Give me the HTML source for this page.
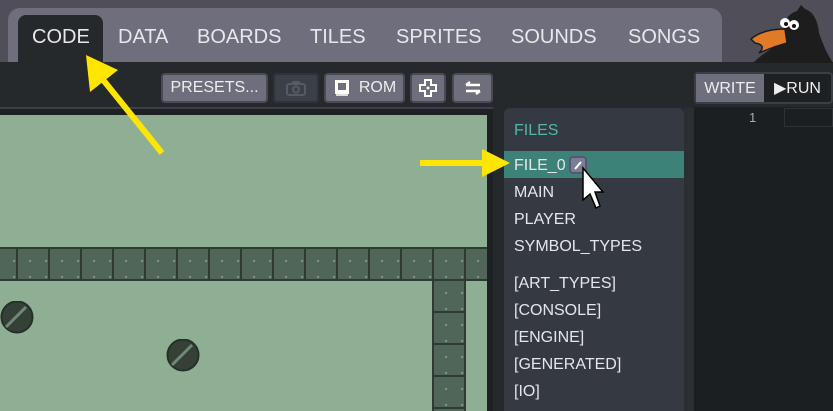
<!DOCTYPE html>
<html><head><style>
*{margin:0;padding:0;box-sizing:border-box}
body{width:833px;height:411px;overflow:hidden;background:#25292b;font-family:"Liberation Sans",sans-serif;position:relative}
.a{position:absolute}
.tab{position:absolute;top:26px;color:#e8e8ec;font-size:20px;letter-spacing:0}
.btn{position:absolute;top:73px;height:30px;background:#6f6e7c;border:2px solid #4a4a55;border-radius:4px;color:#eee;font-size:16px;display:flex;align-items:center;justify-content:center}
.f{position:absolute;left:514px;color:#e6e6ea;font-size:16px}
.tiles{background-color:#506658;background-image:linear-gradient(90deg,#2f3b32 2px,transparent 2px),linear-gradient(#2f3b32 2px,transparent 2px),radial-gradient(circle,#7f9585 1px,transparent 1.3px);background-size:32px 32px,32px 32px,16px 16px}
</style></head><body>
<div class="a" style="left:0;top:0;width:833px;height:62px;background:#4f4e59"></div>
<div class="a" style="left:8px;top:8px;width:714px;height:60px;background:#6f6e7c;border-radius:12px 12px 0 0"></div>
<div class="a" style="left:18px;top:15px;width:85px;height:50px;background:#25292b;border-radius:8px 8px 0 0"></div>
<div class="a" style="left:0;top:62px;width:833px;height:349px;background:#25292b"></div>
<div class="tab" style="left:32px">CODE</div>
<div class="tab" style="left:118px">DATA</div>
<div class="tab" style="left:197px">BOARDS</div>
<div class="tab" style="left:310px">TILES</div>
<div class="tab" style="left:396px">SPRITES</div>
<div class="tab" style="left:511px">SOUNDS</div>
<div class="tab" style="left:628px">SONGS</div>
<svg class="a" style="left:745px;top:3px" width="88" height="60" viewBox="0 0 88 60">
<path d="M8 60 Q22 46 40 40 Q34 14 52 8 L56 2 L60 6 Q72 10 74 30 Q80 48 88 60Z" fill="#1d1d1d"/>
<path d="M6 36 Q18 26 40 26 L42 40 Q28 44 14 50 Q22 42 10 40Z" fill="#e07a26" stroke="#1d1d1d" stroke-width="1.5"/>
<ellipse cx="40" cy="20" rx="5" ry="5" fill="#fff"/><ellipse cx="49" cy="22" rx="5" ry="5" fill="#fff"/>
<circle cx="41" cy="21" r="2" fill="#111"/><circle cx="49" cy="23" r="2" fill="#111"/>
</svg>
<div class="btn" style="left:161px;width:107px">PRESETS...</div>
<div class="btn" style="left:273px;width:46px;background:#3b3f47;border-color:#2f3238;color:#555"><svg width="22" height="16"><rect x="2" y="4" width="18" height="11" rx="2" fill="none" stroke="#555b63" stroke-width="2"/><circle cx="11" cy="9.5" r="3" fill="none" stroke="#555b63" stroke-width="2"/><rect x="7" y="1" width="8" height="3" fill="#555b63"/></svg></div>
<div class="btn" style="left:324px;width:81px"><svg width="18" height="18" style="margin-right:8px"><rect x="2" y="1" width="14" height="14" fill="#fff"/><rect x="5" y="4" width="8" height="7" fill="#6f6e7c"/><rect x="3" y="15" width="12" height="2" fill="#ddd"/></svg>ROM</div>
<div class="btn" style="left:410px;width:36px"><svg width="20" height="20"><path d="M7 2h6v5h5v6h-5v5H7v-5H2V7h5z" fill="none" stroke="#fff" stroke-width="2"/><circle cx="10" cy="10" r="1.5" fill="#fff"/></svg></div>
<div class="btn" style="left:452px;width:41px"><svg width="20" height="16"><path d="M3 5h14M3 5l4-3M17 11H3M17 11l-4 3" stroke="#fff" stroke-width="2.4" fill="none"/></svg></div>
<div class="a" style="left:0;top:107px;width:493px;height:2px;background:#3d4147"></div>
<div class="a" style="left:0;top:109px;width:493px;height:302px;background:#1e2124"></div>
<div class="a" style="left:0;top:115px;width:487px;height:296px;background:#8faf94;overflow:hidden">
 <div class="a tiles" style="left:-16px;top:132px;width:520px;height:34px;background-position:0 0,0 0,6px 6px"></div>
 <div class="a tiles" style="left:432px;top:164px;width:34px;height:140px;background-position:0 0,0 0,6px 6px"></div>
 <div class="a" style="left:432px;top:164px;width:2px;height:140px;background:#2f3b32"></div>
 <div class="a" style="left:464px;top:164px;width:2px;height:140px;background:#2f3b32"></div>
 <svg class="a" style="left:0;top:186px" width="34" height="34"><circle cx="17" cy="16" r="15.5" fill="#354037" stroke="#25302a" stroke-width="2"/><path d="M6 26L26 6" stroke="#6e8a75" stroke-width="3"/></svg>
 <svg class="a" style="left:166px;top:224px" width="34" height="34"><circle cx="17" cy="16" r="15.5" fill="#354037" stroke="#25302a" stroke-width="2"/><path d="M6 26L26 6" stroke="#6e8a75" stroke-width="3"/></svg>
</div>
<div class="a" style="left:504px;top:108px;width:180px;height:303px;background:#353a42;border-radius:6px 6px 0 0"></div>
<div class="a" style="left:684px;top:108px;width:10px;height:303px;background:#2b2f33"></div>
<div class="f" style="top:122px;color:#4fb8a8">FILES</div>
<div class="a" style="left:504px;top:151px;width:180px;height:27px;background:#3d8278"></div>
<div class="f" style="top:157px">FILE_0</div>
<div class="a" style="left:569px;top:156px;width:18px;height:18px;background:#7a7d95;border:2px solid #555870;border-radius:4px"><svg width="14" height="14"><path d="M4 11l6-7" stroke="#fff" stroke-width="2"/></svg></div>
<div class="f" style="top:184px">MAIN</div>
<div class="f" style="top:211px">PLAYER</div>
<div class="f" style="top:238px">SYMBOL_TYPES</div>
<div class="f" style="top:275px">[ART_TYPES]</div>
<div class="f" style="top:302px">[CONSOLE]</div>
<div class="f" style="top:329px">[ENGINE]</div>
<div class="f" style="top:356px">[GENERATED]</div>
<div class="f" style="top:383px">[IO]</div>
<div class="a" style="left:694px;top:72px;width:139px;height:32px;background:#1e2124;border:2px solid #3a3e45;border-radius:4px"></div>
<div class="a" style="left:696px;top:74px;width:68px;height:28px;background:#6f6e7c;color:#eee;font-size:16px;text-align:center;line-height:30px">WRITE</div>
<div class="a" style="left:774px;top:74px;color:#eee;font-size:16px;line-height:30px">&#9654;RUN</div>
<div class="a" style="left:694px;top:107px;width:139px;height:304px;background:#1c1f21"></div>
<div class="a" style="left:749px;top:110px;color:#aaa;font-size:13px">1</div>
<div class="a" style="left:784px;top:108px;width:49px;height:19px;border:1px solid #2e3236"></div>
<svg class="a" style="left:0;top:0" width="833" height="411">
<path d="M162 153L100 76" stroke="#ffe600" stroke-width="6"/>
<path d="M86 55L90 92L118 70Z" fill="#ffe600"/>
<path d="M420 163H488" stroke="#ffe600" stroke-width="6"/>
<path d="M510 163L482 149V177Z" fill="#ffe600"/>
<path d="M583 168V200L590 194L596 208L600 206L595 192L603 192Z" fill="#fff" stroke="#000" stroke-width="1.5"/>
</svg>
</body></html>
